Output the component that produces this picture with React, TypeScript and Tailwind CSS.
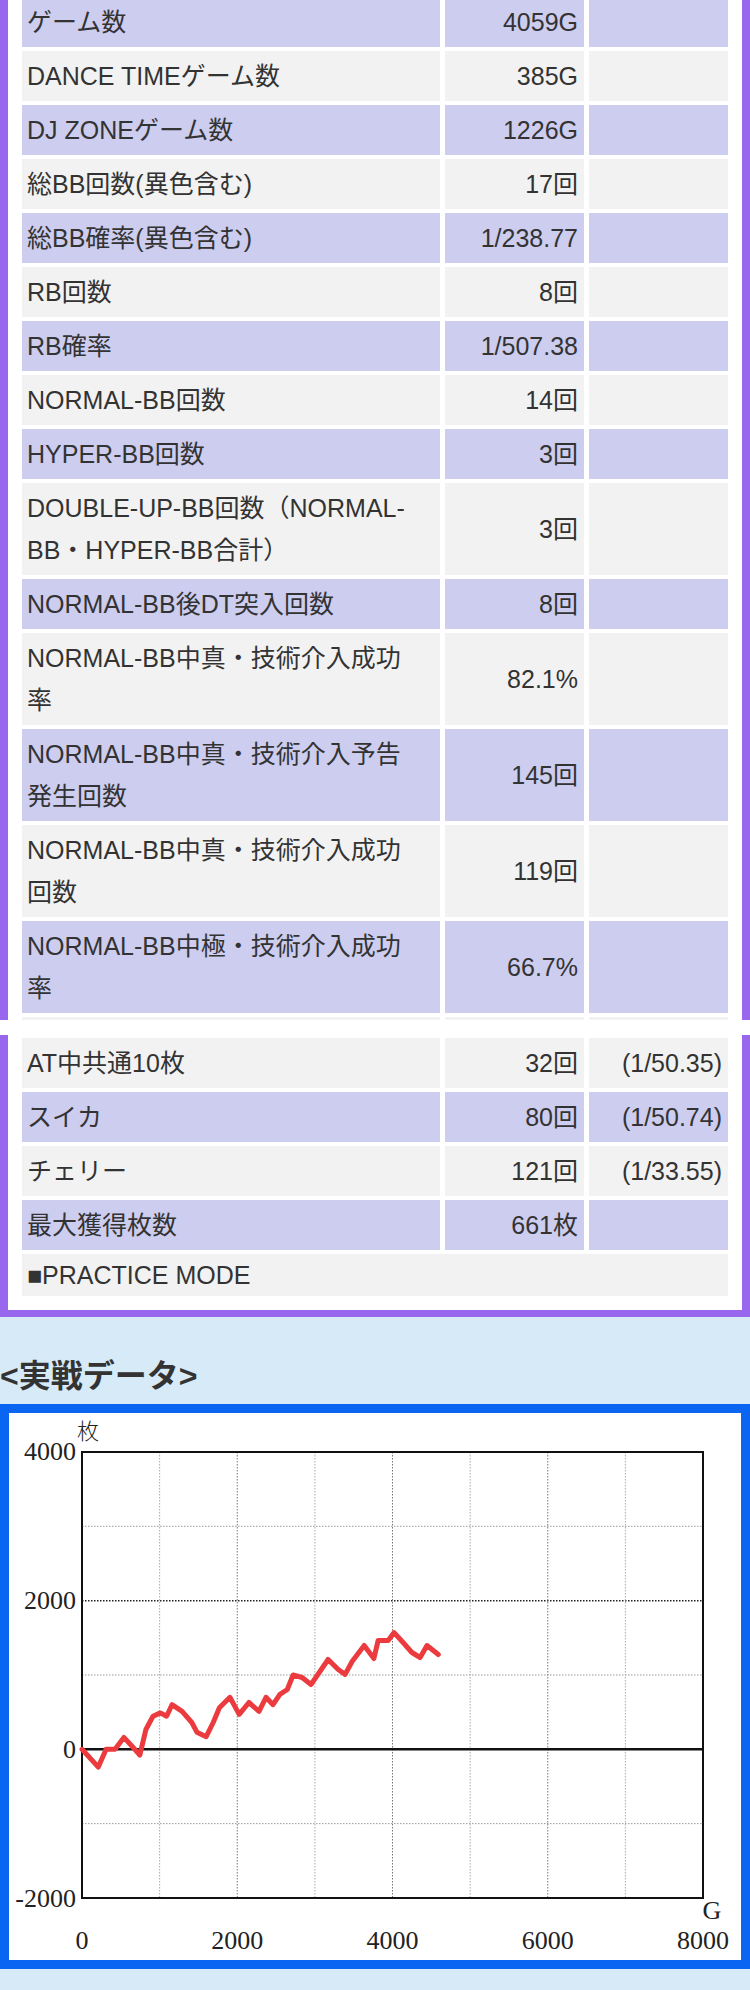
import React from "react";

type Row = {
  label: string[];
  value: string;
  extra?: string;
};

const upperRows: Row[] = [
  { label: ["ゲーム数"], value: "4059G" },
  { label: ["DANCE TIMEゲーム数"], value: "385G" },
  { label: ["DJ ZONEゲーム数"], value: "1226G" },
  { label: ["総BB回数(異色含む)"], value: "17回" },
  { label: ["総BB確率(異色含む)"], value: "1/238.77" },
  { label: ["RB回数"], value: "8回" },
  { label: ["RB確率"], value: "1/507.38" },
  { label: ["NORMAL-BB回数"], value: "14回" },
  { label: ["HYPER-BB回数"], value: "3回" },
  { label: ["DOUBLE-UP-BB回数（NORMAL-", "BB・HYPER-BB合計）"], value: "3回" },
  { label: ["NORMAL-BB後DT突入回数"], value: "8回" },
  { label: ["NORMAL-BB中真・技術介入成功", "率"], value: "82.1%" },
  { label: ["NORMAL-BB中真・技術介入予告", "発生回数"], value: "145回" },
  { label: ["NORMAL-BB中真・技術介入成功", "回数"], value: "119回" },
  { label: ["NORMAL-BB中極・技術介入成功", "率"], value: "66.7%" },
];

const lowerRows: Row[] = [
  { label: ["AT中共通10枚"], value: "32回", extra: "(1/50.35)" },
  { label: ["スイカ"], value: "80回", extra: "(1/50.74)" },
  { label: ["チェリー"], value: "121回", extra: "(1/33.55)" },
  { label: ["最大獲得枚数"], value: "661枚" },
];

// G / 枚
const graph: [number, number][] = [
  [0, 0], [210, -240], [310, 0], [425, 0], [540, 160], [680, 0], [745, -80],
  [825, 270], [915, 445], [1010, 490], [1090, 445], [1160, 600], [1290, 510],
  [1415, 360], [1480, 230], [1600, 170], [1690, 360], [1770, 560], [1905, 700],
  [2025, 470], [2150, 630], [2280, 510], [2370, 700], [2460, 600], [2550, 740],
  [2645, 805], [2720, 1000], [2835, 966], [2950, 872], [3065, 1047], [3170, 1208],
  [3300, 1074], [3390, 1007], [3480, 1181], [3635, 1396], [3760, 1221],
  [3815, 1463], [3945, 1463], [4020, 1570], [4125, 1450], [4250, 1302],
  [4355, 1235], [4445, 1396], [4590, 1275],
];

const gx = (g: number) => 73 + g * 0.077625;
const gy = (v: number) => 336.3 - v * 0.07433;

const DataRow: React.FC<{ row: Row; odd: boolean }> = ({ row, odd }) => {
  const bg = odd ? "bg-[#cdcdf0]" : "bg-[#f2f2f2]";
  return (
    <div className="grid grid-cols-[418px_139px_139px] gap-x-[5px]">
      <div className={`${bg} px-[5px] py-[4px]`}>
        {row.label.map((line) => (
          <div key={line} className="whitespace-nowrap">
            {line}
          </div>
        ))}
      </div>
      <div className={`${bg} flex items-center justify-end pr-[6px]`}>{row.value}</div>
      <div className={`${bg} flex items-center justify-end pr-[6px]`}>{row.extra}</div>
    </div>
  );
};

const Chart: React.FC = () => {
  const pts = graph.map(([g, v]) => `${gx(g).toFixed(1)},${gy(v).toFixed(1)}`).join(" ");
  const vLines = [1000, 2000, 3000, 4000, 5000, 6000, 7000];
  return (
    <svg width="732" height="547" viewBox="0 0 732 547" className="block">
      {/* grid */}
      {[3000, 1000, -1000].map((v) => (
        <line key={v} x1="73" x2="694" y1={gy(v)} y2={gy(v)} stroke="#9a9a9a" strokeWidth="1" strokeDasharray="1.5 1.5" />
      ))}
      <line x1="73" x2="694" y1={gy(2000)} y2={gy(2000)} stroke="#222" strokeWidth="1.5" strokeDasharray="1.5 1.5" />
      {vLines.map((g) => (
        <line
          key={g}
          x1={gx(g)}
          x2={gx(g)}
          y1="39"
          y2="485"
          stroke={g % 2000 === 0 ? "#777" : "#aaa"}
          strokeWidth="1"
          strokeDasharray="1.5 1.5"
        />
      ))}
      <line x1="73" x2="694" y1={gy(0)} y2={gy(0)} stroke="#111" strokeWidth="2.5" />
      <rect x="73" y="39" width="621" height="446" fill="none" stroke="#111" strokeWidth="2" />

      <polyline points={pts} fill="none" stroke="#ec3b3f" strokeWidth="5" strokeLinejoin="round" strokeLinecap="round" />

      {/* labels */}
      <g fontFamily="'Liberation Serif', serif" fontSize="26" fill="#222">
        <text x="67" y="47" textAnchor="end">4000</text>
        <text x="67" y="196" textAnchor="end">2000</text>
        <text x="67" y="345" textAnchor="end">0</text>
        <text x="67" y="494" textAnchor="end">-2000</text>
        <text x="73" y="536" textAnchor="middle">0</text>
        <text x={gx(2000)} y="536" textAnchor="middle">2000</text>
        <text x={gx(4000)} y="536" textAnchor="middle">4000</text>
        <text x={gx(6000)} y="536" textAnchor="middle">6000</text>
        <text x="694" y="536" textAnchor="middle">8000</text>
        <text x="703" y="506" textAnchor="middle">G</text>
      </g>
      <text x="68" y="26" fontSize="22" fill="#222" fontFamily="'Noto Sans CJK JP', sans-serif" fontWeight="300">
        枚
      </text>
    </svg>
  );
};

export default function App() {
  return (
    <div className="w-[750px] bg-[#d6eaf8] font-['Liberation_Sans','Noto_Sans_CJK_JP',sans-serif] text-[25px] leading-[42px] text-[#333]">
      {/* upper table (cut off at the top) */}
      <div className="bg-white">
        <div className="-mt-[3px] border-x-8 border-[#9966ee] bg-white px-[14px]">
          <div className="flex flex-col gap-[4px]">
            {upperRows.map((row, i) => (
              <DataRow key={i} row={row} odd={i % 2 === 0} />
            ))}
            <div className="grid h-[3px] grid-cols-[418px_139px_139px] gap-x-[5px]">
              <div className="bg-[#f2f2f2]" />
              <div className="bg-[#f2f2f2]" />
              <div className="bg-[#f2f2f2]" />
            </div>
          </div>
        </div>
        <div className="h-[15px] bg-white" />

        {/* lower table */}
        <div className="border-x-8 border-b-[7px] border-[#9966ee] bg-white px-[14px] pt-[3px] pb-[14px]">
          <div className="flex flex-col gap-[4px]">
            {lowerRows.map((row, i) => (
              <DataRow key={i} row={row} odd={i % 2 === 1} />
            ))}
            <div className="flex h-[42px] items-center bg-[#f2f2f2] px-[5px]">■PRACTICE MODE</div>
          </div>
        </div>
      </div>

      <h2 className="pt-[35px] pb-[4px] text-[32px] font-bold leading-[48px] text-[#333]">
        {"<実戦データ>"}
      </h2>

      <div className="border-[9px] border-[#0a66f2] bg-white">
        <Chart />
      </div>
      <div className="h-[21px]" />
    </div>
  );
}
